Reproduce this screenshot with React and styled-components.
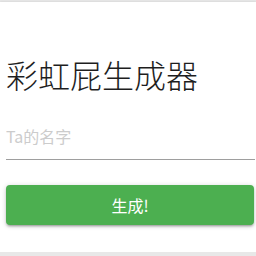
import React from 'react';
import styled, { createGlobalStyle } from 'styled-components';

const GlobalStyle = createGlobalStyle`
  html, body {
    margin: 0;
    padding: 0;
    background: #e8e8e8;
    font-family: "Noto Sans CJK SC", "Noto Sans", sans-serif;
  }
`;

const Card = styled.div`
  margin-top: 2px;
  height: 250px;
  box-sizing: border-box;
  background: #fff;
  padding: 0 2px 0 6px;
  display: flex;
  flex-direction: column;
  box-shadow: 0 1px 3px rgba(0, 0, 0, 0.25);
`;

const Title = styled.h1`
  margin: 52px 0 0;
  font-size: 32px;
  line-height: 40px;
  font-weight: 300;
  color: #1e1e1e;
`;

const NameInput = styled.input`
  margin-top: 18px;
  height: 48px;
  box-sizing: border-box;
  width: calc(100% + 1px);
  border: none;
  border-bottom: 1px solid #9e9e9e;
  outline: none;
  padding: 0;
  font-family: inherit;
  font-size: 16px;
  color: #333;
  background: transparent;
  &::placeholder {
    color: #cccccc;
  }
`;

const Button = styled.button`
  margin-top: 25px;
  height: 40px;
  border: none;
  border-radius: 4px;
  background: #4caf50;
  color: #fff;
  font-family: inherit;
  font-size: 16px;
  cursor: pointer;
  box-shadow: 0 2px 2px 0 rgba(0, 0, 0, 0.14), 0 3px 1px -2px rgba(0, 0, 0, 0.12),
    0 1px 5px 0 rgba(0, 0, 0, 0.2);
`;

export default function App() {
  return (
    <>
      <GlobalStyle />
      <Card>
        <Title>彩虹屁生成器</Title>
        <NameInput placeholder="Ta的名字" />
        <Button>生成!</Button>
      </Card>
    </>
  );
}
